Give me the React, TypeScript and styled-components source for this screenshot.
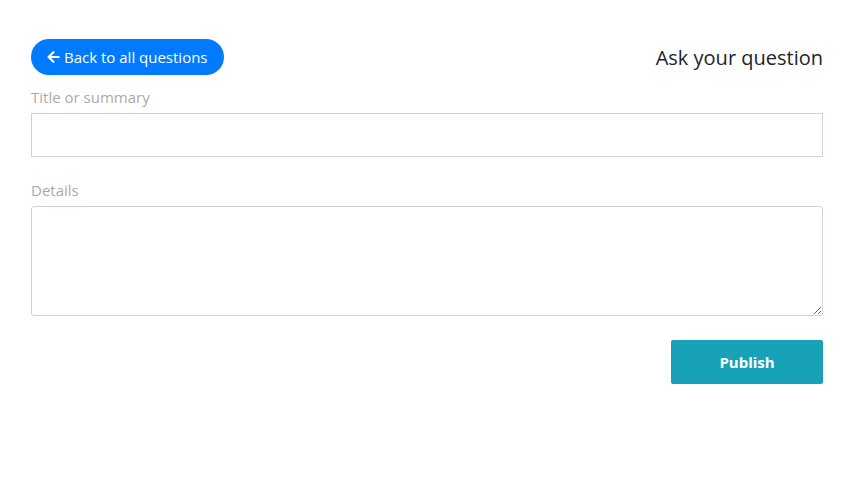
import React from "react";
import styled, { createGlobalStyle } from "styled-components";

const Global = createGlobalStyle`
  html, body { margin: 0; padding: 0; background: #fff; }
  body { font-family: "Open Sans", "Liberation Sans", sans-serif; color: #212529; }
  * { box-sizing: border-box; }
`;

const Page = styled.div`
  width: 792px;
  margin: 39px 0 0 31px;
  display: flex;
  flex-direction: column;
`;

const Header = styled.div`
  display: flex;
  align-items: center;
  justify-content: space-between;
  height: 36px;
`;

const BackButton = styled.button`
  display: inline-flex;
  align-items: center;
  gap: 4px;
  height: 36px;
  padding: 0 16px 0 16px;
  border: none;
  border-radius: 18px;
  background: #007bff;
  color: #fff;
  font-family: inherit;
  font-size: 15px;
  font-weight: 500;
  cursor: pointer;
`;

const Title = styled.h1`
  margin: 0;
  font-size: 20px;
  font-weight: 400;
  color: #212529;
`;

const Label = styled.label<{ $top: number }>`
  display: block;
  margin-top: ${(p) => p.$top}px;
  margin-bottom: 5px;
  font-size: 15px;
  line-height: 22px;
  color: #aaa;
`;

const Input = styled.input`
  width: 100%;
  height: 44px;
  border: 1px solid #ced4da;
  border-radius: 0;
  padding: 0 12px;
  font-family: inherit;
  font-size: 14px;
  outline: none;
`;

const TextArea = styled.textarea`
  width: 100%;
  height: 110px;
  border: 1px solid #ced4da;
  border-radius: 3px;
  padding: 8px 12px;
  font-family: inherit;
  font-size: 14px;
  outline: none;
  display: block;
`;

const Actions = styled.div`
  display: flex;
  justify-content: flex-end;
  margin-top: 24px;
`;

const Publish = styled.button`
  width: 152px;
  height: 44px;
  border: none;
  border-radius: 2px;
  background: #17a2b8;
  color: #fff;
  font-family: inherit;
  font-size: 15px;
  font-weight: 700;
  cursor: pointer;
`;

const Arrow = () => (
  <svg width="13" height="14" viewBox="0 0 448 512" fill="currentColor">
    <path d="M257.5 445.1l-22.2 22.2c-9.4 9.4-24.6 9.4-33.9 0L7 273c-9.4-9.4-9.4-24.6 0-33.9L201.4 44.7c9.4-9.4 24.6-9.4 33.9 0l22.2 22.2c9.5 9.5 9.3 25-.4 34.3L136.6 216H424c13.3 0 24 10.7 24 24v32c0 13.3-10.7 24-24 24H136.6l120.5 114.8c9.8 9.3 10 24.8.4 34.3z" />
  </svg>
);

export default function App() {
  return (
    <>
      <Global />
      <Page>
        <Header>
          <BackButton>
            <Arrow />
            Back to all questions
          </BackButton>
          <Title>Ask your question</Title>
        </Header>
        <Label $top={11}>Title or summary</Label>
        <Input />
        <Label $top={22}>Details</Label>
        <TextArea />
        <Actions>
          <Publish>Publish</Publish>
        </Actions>
      </Page>
    </>
  );
}
